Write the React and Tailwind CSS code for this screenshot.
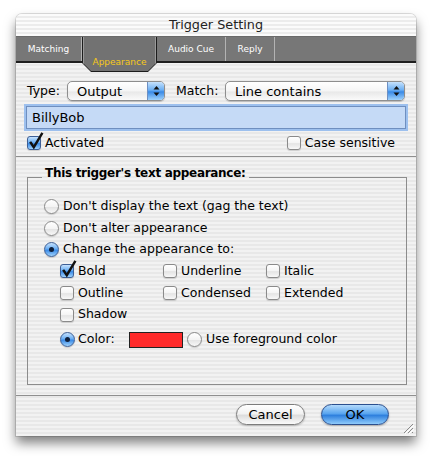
import React from "react";

function Checkbox({ checked }) {
  return (
    <span
      className={
        "relative inline-block shrink-0 w-[14px] h-[14px] rounded-[3px] border shadow-[0_1px_1px_rgba(0,0,0,0.15)] " +
        (checked
          ? "border-[#3d5f96] bg-[linear-gradient(180deg,#c6e2fd_0%,#6aaef3_45%,#3a8ae6_55%,#9fd2fc_100%)]"
          : "border-[#8a8a8a] bg-[linear-gradient(180deg,#ffffff_0%,#f4f4f4_50%,#e4e4e4_55%,#f8f8f8_100%)]")
      }
    >
      {checked && (
        <svg className="absolute left-[1px] top-[-4px] overflow-visible" width="14" height="16" viewBox="0 0 14 16">
          <path d="M1.8 9.8 L4.8 14.2 L12.8 1" fill="none" stroke="#111" strokeWidth="2.4" strokeLinecap="square" />
        </svg>
      )}
    </span>
  );
}

function Radio({ checked }) {
  return (
    <span
      className={
        "inline-flex shrink-0 items-center justify-center w-[15px] h-[15px] rounded-full border shadow-[0_1px_1px_rgba(0,0,0,0.15)] " +
        (checked
          ? "border-[#3d5f96] bg-[linear-gradient(180deg,#c6e2fd_0%,#6aaef3_45%,#3a8ae6_55%,#9fd2fc_100%)]"
          : "border-[#8a8a8a] bg-[linear-gradient(180deg,#ffffff_0%,#f4f4f4_50%,#e4e4e4_55%,#f8f8f8_100%)]")
      }
    >
      {checked && <span className="w-[5px] h-[5px] rounded-full bg-[#0f1f3a]" />}
    </span>
  );
}

function Arrows() {
  return (
    <svg width="7" height="12" viewBox="0 0 7 12">
      <path d="M3.5 1 L6.5 4.5 L0.5 4.5 Z" fill="#111" />
      <path d="M3.5 11 L6.5 7.5 L0.5 7.5 Z" fill="#111" />
    </svg>
  );
}

function Popup({ label, w }) {
  return (
    <div
      className={
        "flex h-[20px] rounded-[5px] border border-[#8e8e8e] overflow-hidden shadow-[0_1px_1px_rgba(0,0,0,0.2)] bg-[linear-gradient(180deg,#ffffff_0%,#f5f5f5_50%,#e8e8e8_55%,#fafafa_100%)] " +
        w
      }
    >
      <span className="flex-1 pl-[9px] leading-[19px] text-black text-[13px]">{label}</span>
      <span className="w-[17px] flex items-center justify-center border-l border-[#6d8fc2] bg-[linear-gradient(180deg,#c6e2fd_0%,#6aaef3_45%,#3a8ae6_55%,#9fd2fc_100%)]">
        <Arrows />
      </span>
    </div>
  );
}

export default function App() {
  return (
    <div className="w-[432px] h-[456px] bg-white pt-[14px] pl-[16px] font-['DejaVu_Sans',sans-serif] text-[12.5px] text-black">
      <div className="relative w-[400px] rounded-t-[6px] overflow-hidden shadow-[0_0_0_1px_rgba(0,0,0,0.12),0_7px_12px_rgba(0,0,0,0.5)] bg-[repeating-linear-gradient(180deg,#f2f2f2_0px,#f2f2f2_2px,#e8e8e8_2px,#e8e8e8_4px)]">
        {/* Title bar */}
        <div className="h-[23px] border-b border-[#6a6a6a] flex items-center justify-center bg-[repeating-linear-gradient(180deg,#fbfbfb_0px,#fbfbfb_2px,#ececec_2px,#ececec_4px)]">
          <span className="text-[12.8px] text-[#222] leading-none pt-[1px]">Trigger Setting</span>
        </div>
        {/* Tab bar */}
        <div className="flex h-[26px] bg-[#777777] border-b-2 border-[#1e1e1e] text-white text-[9px]">
          <div className="w-[66px] h-full flex items-center justify-center border-r border-[#b3b3b3] pt-[1px]">Matching</div>
          <div className="relative z-10 w-[75px] h-[35px] shrink-0 bg-[#1c1c1c] px-[1px] pb-[1px] [clip-path:polygon(0_0,100%_0,100%_calc(100%_-_9px),calc(100%_-_9px)_100%,9px_100%,0_calc(100%_-_9px))]">
            <div className="h-full flex items-end justify-center pb-[3px] bg-[#727272] border-l border-r border-[#9a9a9a] [clip-path:polygon(0_0,100%_0,100%_calc(100%_-_8px),calc(100%_-_8px)_100%,8px_100%,0_calc(100%_-_8px))]">
              <span className="leading-[11px] text-[#f6c81a]">Appearance</span>
            </div>
          </div>
          <div className="w-[69px] h-full flex items-center justify-center border-r border-[#b3b3b3] pt-[1px]">Audio Cue</div>
          <div className="w-[49px] h-full flex items-center justify-center border-r border-[#b3b3b3] pt-[1px]">Reply</div>
        </div>

        {/* Top settings */}
        <div className="px-[10px] pt-[18px]">
          <div className="flex items-center h-[20px]">
            <span className="w-[41px] pl-[1px]">Type:</span>
            <Popup label="Output" w="w-[98px]" />
            <span className="ml-[11px] w-[49px]">Match:</span>
            <Popup label="Line contains" w="w-[180px]" />
          </div>
          <div className="mt-[5px] h-[23px] w-[380px] border border-[#6f8fbf] bg-[#c5daf6] shadow-[0_0_0_2px_#9dc0ee] flex items-center pl-[5px] text-[13px]">
            BillyBob
          </div>
          <div className="mt-[7px] h-[14px] flex items-center">
            <span className="ml-[1px] flex"><Checkbox checked /></span>
            <span className="ml-[4px]">Activated</span>
            <span className="ml-auto flex items-center mr-[11px]">
              <Checkbox />
              <span className="ml-[4px]">Case sensitive</span>
            </span>
          </div>
        </div>
        <div className="mt-[6px] border-t border-[#8f8f8f]" />

        {/* Group box */}
        <fieldset className="mt-[9px] ml-[11px] w-[380px] border border-[#8c8c8c] pb-[34px]">
          <legend className="ml-[14px] px-[3px] pb-[8px] font-bold text-[12px] tracking-[-0.3px] leading-[15px]">
            This trigger's text appearance:
          </legend>
          <div className="pt-[7px] flex flex-col">
            <div className="h-[21px] flex items-center pl-[16px]">
              <Radio />
              <span className="ml-[4px]">Don't display the text (gag the text)</span>
            </div>
            <div className="h-[22px] flex items-center pl-[16px]">
              <Radio />
              <span className="ml-[4px]">Don't alter appearance</span>
            </div>
            <div className="h-[21px] flex items-center pl-[16px]">
              <Radio checked />
              <span className="ml-[4px]">Change the appearance to:</span>
            </div>
            <div className="pl-[32px] grid grid-cols-[103px_103px_100px]">
              <div className="h-[22px] flex items-center"><Checkbox checked /><span className="ml-[4px]">Bold</span></div>
              <div className="h-[22px] flex items-center"><Checkbox /><span className="ml-[4px]">Underline</span></div>
              <div className="h-[22px] flex items-center"><Checkbox /><span className="ml-[4px]">Italic</span></div>
              <div className="h-[22px] flex items-center"><Checkbox /><span className="ml-[4px]">Outline</span></div>
              <div className="h-[22px] flex items-center"><Checkbox /><span className="ml-[4px]">Condensed</span></div>
              <div className="h-[22px] flex items-center"><Checkbox /><span className="ml-[4px]">Extended</span></div>
              <div className="h-[21px] flex items-center"><Checkbox /><span className="ml-[4px]">Shadow</span></div>
            </div>
            <div className="mt-[4px] h-[21px] flex items-center pl-[32px]">
              <Radio checked />
              <span className="ml-[3px] w-[51px]">Color:</span>
              <span className="w-[54px] h-[16px] bg-[#ff2a2a] border border-[#222]" />
              <span className="ml-[4px] flex"><Radio /></span>
              <span className="ml-[4px]">Use foreground color</span>
            </div>
          </div>
        </fieldset>

        <div className="mt-[10px] border-t border-[#8f8f8f]" />

        {/* Buttons */}
        <div className="mt-[8px] pb-[11px] flex justify-end pr-[27px] gap-[16px]">
          <button className="w-[69px] h-[21px] rounded-full border border-[#7c7c7c] bg-[linear-gradient(180deg,#ffffff_0%,#f2f2f2_45%,#dddddd_55%,#fafafa_100%)] shadow-[0_1px_2px_rgba(0,0,0,0.25)] text-[13px] leading-none">
            Cancel
          </button>
          <button className="w-[68px] h-[21px] rounded-full border border-[#2b4f8e] bg-[linear-gradient(180deg,#b3dafc_0%,#5aa5ef_45%,#2f80de_55%,#8fcbfb_100%)] shadow-[0_1px_2px_rgba(0,0,0,0.3)] text-[13px] leading-none">
            OK
          </button>
        </div>

        <svg className="absolute right-[2px] bottom-[2px]" width="12" height="12" viewBox="0 0 12 12">
          <path d="M11 2 L2 11 M11 6 L6 11 M11 10 L10 11" stroke="#8a8a8a" strokeWidth="1" />
          <path d="M12 3 L3 12 M12 7 L7 12" stroke="#ffffff" strokeWidth="1" />
        </svg>
      </div>
    </div>
  );
}
